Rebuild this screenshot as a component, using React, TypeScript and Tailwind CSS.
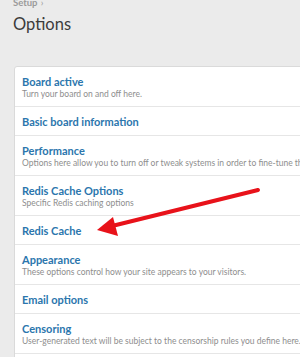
const rows = [
  { title: "Board active", desc: "Turn your board on and off here." },
  { title: "Basic board information" },
  {
    title: "Performance",
    desc: "Options here allow you to turn off or tweak systems in order to fine-tune the performance of your board.",
  },
  { title: "Redis Cache Options", desc: "Specific Redis caching options" },
  { title: "Redis Cache" },
  { title: "Appearance", desc: "These options control how your site appears to your visitors." },
  { title: "Email options" },
  { title: "Censoring", desc: "User-generated text will be subject to the censorship rules you define here." },
  { title: "Custom BB codes" },
];

export default function App() {
  return (
    <div className="relative h-[357px] w-[300px] overflow-hidden bg-[#ebebeb] font-['Lato',sans-serif]">
      <div className="ml-[13px] mt-[-3px] text-[9.5px] font-bold leading-[12px] text-[#9a9a9a]">
        Setup <span className="ml-[1px] font-normal">›</span>
      </div>
      <h1 className="ml-[13px] mt-[3px] text-[16.5px] leading-[24px] text-[#3c3c3c]">Options</h1>

      <div className="ml-[14px] mt-[30px] w-[320px] rounded-[3px] border border-[#dadada] bg-white">
        {rows.map((row) => (
          <div key={row.title} className="border-b border-[#e6e6e6] px-[7px] pb-[6px] pt-[7px] whitespace-nowrap">
            <div className="text-[11px] font-bold leading-[15px] text-[#2b76ad]">{row.title}</div>
            {row.desc && <div className="text-[8.5px] leading-[11px] text-[#8e8e8e]">{row.desc}</div>}
          </div>
        ))}
      </div>

      <svg className="pointer-events-none absolute left-0 top-0" width="300" height="357" viewBox="0 0 300 357">
        <line x1="258" y1="190" x2="112" y2="226" stroke="#e8121a" strokeWidth="4" strokeLinecap="round" />
        <polygon points="97,230 113,217 118,236" fill="#e8121a" />
      </svg>
    </div>
  );
}
